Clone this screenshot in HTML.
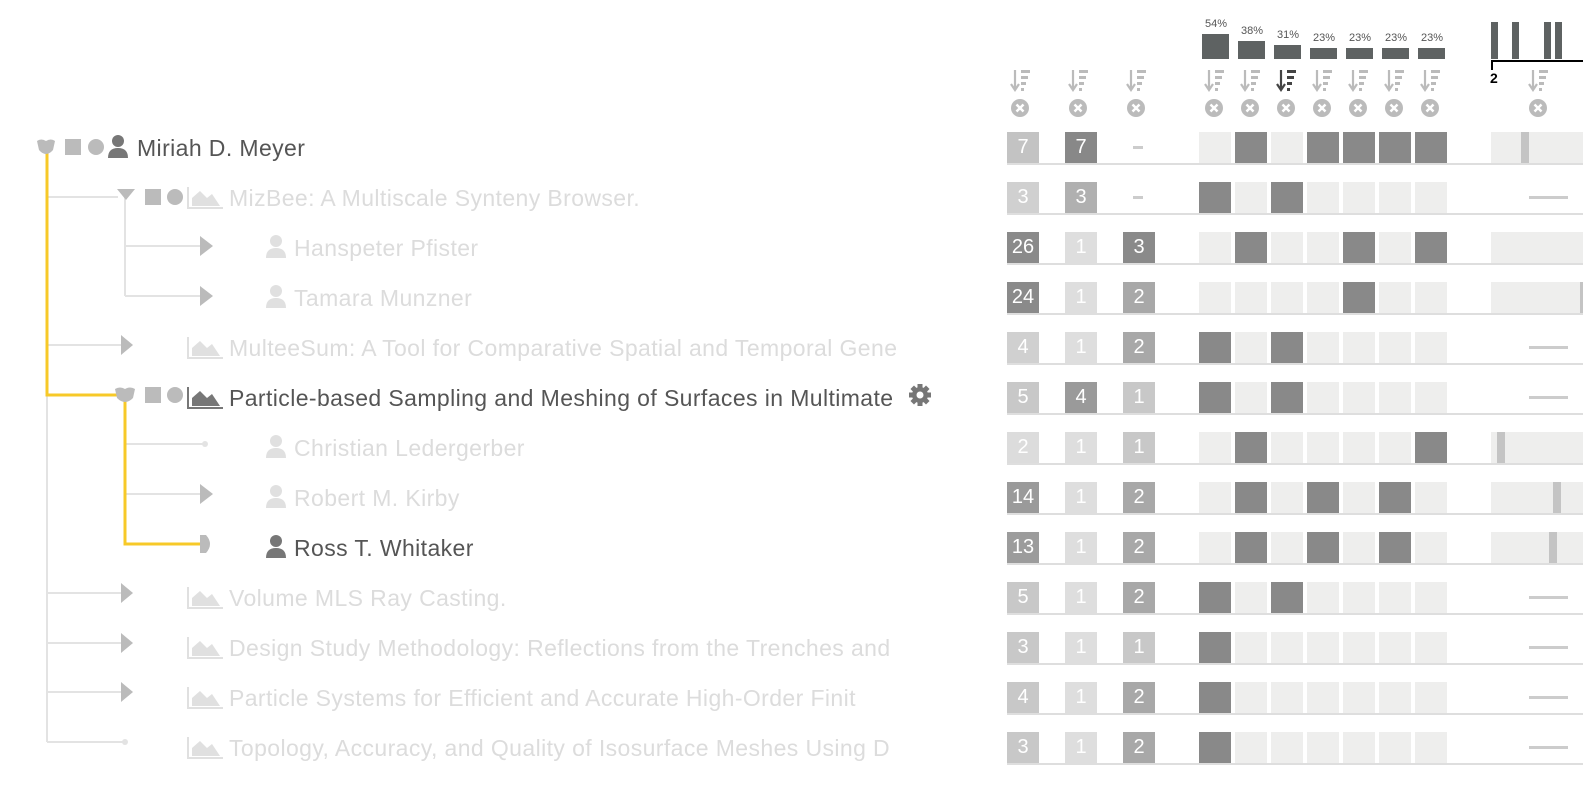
<!DOCTYPE html>
<html><head><meta charset="utf-8"><style>
html,body{margin:0;padding:0;background:#fff;width:1583px;height:792px;overflow:hidden;position:relative;font-family:"Liberation Sans",sans-serif}
.a{position:absolute}
.t{position:absolute;font-size:23px;line-height:26px;white-space:nowrap;color:#dcdcdc;letter-spacing:0.4px}
.on{color:#555}
.nb{position:absolute;width:32px;height:31px;color:#fff;font-size:20px;line-height:31px;text-align:center}
.pct{position:absolute;font-size:11px;color:#555;width:36px;text-align:center}
</style></head><body>
<svg class="a" style="left:0;top:0" width="1583" height="792" id="s">
<g stroke="#e3e3e3" stroke-width="2" fill="none">
<line x1="47" y1="395" x2="47" y2="742"/>
<line x1="47" y1="197" x2="118" y2="197"/>
<line x1="125" y1="197" x2="125" y2="296"/>
<line x1="125" y1="246" x2="200" y2="246"/>
<line x1="125" y1="296" x2="200" y2="296"/>
<line x1="47" y1="345" x2="121" y2="345"/>
<line x1="125" y1="444" x2="205" y2="444"/>
<line x1="125" y1="494" x2="200" y2="494"/>
<line x1="47" y1="593" x2="121" y2="593"/>
<line x1="47" y1="643" x2="121" y2="643"/>
<line x1="47" y1="692" x2="121" y2="692"/>
<line x1="47" y1="742" x2="125" y2="742"/>
</g>
<circle cx="205" cy="444" r="3" fill="#e3e3e3"/>
<circle cx="125" cy="742" r="3" fill="#e3e3e3"/>
<g stroke="#f7c928" stroke-width="3" fill="none">
<polyline points="47,150 47,395 125,395"/>
<polyline points="125,398 125,544 202,544"/>
</g>
<path d="M37,141 Q41,138 46,141 Q51,138 55,141 L53,150 Q46,158 39,150 Z" fill="#bbb"/>
<rect x="65" y="139" width="16" height="16" fill="#bbb"/>
<circle cx="96" cy="147" r="8" fill="#bbb"/>
<g fill="#777"><circle cx="118" cy="141" r="6"/><path d="M108,158 Q108,148 118,148 Q128,148 128,158 Z"/></g>
<path d="M117,189 L135,189 L126,200 Z" fill="#bbb"/>
<rect x="145" y="189" width="16" height="16" fill="#bbb"/>
<circle cx="175" cy="197" r="8" fill="#bbb"/>
<path d="M115,389 Q120,386 125,389 Q130,386 135,389 L133,398 Q125,406 117,398 Z" fill="#bbb"/>
<rect x="145" y="387" width="16" height="16" fill="#bbb"/>
<circle cx="175" cy="395" r="8" fill="#bbb"/>
<g fill="#bbb">
<path d="M121,335 L133,345 L121,355 Z"/>
<path d="M121,583 L133,593 L121,603 Z"/>
<path d="M121,633 L133,643 L121,653 Z"/>
<path d="M121,682 L133,692 L121,702 Z"/>
<path d="M200,236 L213,246 L200,256 Z"/>
<path d="M200,286 L213,296 L200,306 Z"/>
<path d="M200,484 L213,494 L200,504 Z"/>
<path d="M200,535 L206,535 Q214,544 206,553 L200,553 Z"/>
</g>
<g transform="translate(920,395)" fill="#777">
<circle r="8"/>
<g id="teeth"></g>
<circle r="3.5" fill="#fff"/>
</g>
</svg>
<div id="txt"></div>
<script>
var s=document.getElementById('s'),NS='http://www.w3.org/2000/svg';
function el(n,a,p){var e=document.createElementNS(NS,n);for(var k in a)e.setAttribute(k,a[k]);(p||s).appendChild(e);return e;}
var teeth=document.getElementById('teeth');
for(var i=0;i<8;i++){el('rect',{x:-2.5,y:-11,width:5,height:6,transform:'rotate('+(i*45)+')'},teeth);}
function person(x,y,c){el('circle',{cx:x+11,cy:y-6,r:6,fill:c});el('path',{d:'M'+(x+1)+','+(y+11)+' Q'+(x+1)+','+(y+1)+' '+(x+11)+','+(y+1)+' Q'+(x+21)+','+(y+1)+' '+(x+21)+','+(y+11)+' Z',fill:c});}
function chart(x,y,c,c2){el('path',{d:'M'+x+','+(y-10)+' L'+x+','+(y+11)+' L'+(x+35)+','+(y+11),stroke:c2,'stroke-width':2,fill:'none'});el('path',{d:'M'+(x+4)+','+(y+9)+' L'+(x+4)+','+(y+1)+' L'+(x+12)+','+(y-6)+' L'+(x+19)+','+(y+1)+' L'+(x+24)+','+(y-3)+' L'+(x+32)+','+(y+9)+' Z',fill:c});}
var Y=function(i){return 147+50*i;};
var rows=[
[0,'Miriah D. Meyer',1],[1,'MizBee: A Multiscale Synteny Browser.',0],[2,'Hanspeter Pfister',0],[2,'Tamara Munzner',0],
[1,'MulteeSum: A Tool for Comparative Spatial and Temporal Gene',0],[1,'Particle-based Sampling and Meshing of Surfaces in Multimate',1],
[2,'Christian Ledergerber',0],[2,'Robert M. Kirby',0],[2,'Ross T. Whitaker',1],[1,'Volume MLS Ray Casting.',0],
[1,'Design Study Methodology: Reflections from the Trenches and',0],[1,'Particle Systems for Efficient and Accurate High-Order Finit',0],
[1,'Topology, Accuracy, and Quality of Isosurface Meshes Using D',0]];
var h='';
rows.forEach(function(r,i){var y=Y(i);var x=r[0]==0?137:r[0]==1?229:294;
 h+='<div class="t'+(r[2]?' on':'')+'" style="left:'+x+'px;top:'+(y-12)+'px">'+r[1]+'</div>';
 if(r[0]==1)chart(188,y,r[2]?'#777':'#e0e0e0',r[2]?'#777':'#e0e0e0');
 if(r[0]==2)person(265,y,r[2]?'#777':'#e0e0e0');
});
var N=[[['7','#c3c3c3'],['7','#888'],null],[['3','#d0d0d0'],['3','#b0b0b0'],null],[['26','#8a8a8a'],['1','#dedede'],['3','#8a8a8a']],
[['24','#8a8a8a'],['1','#dedede'],['2','#a8a8a8']],[['4','#d0d0d0'],['1','#dedede'],['2','#a8a8a8']],[['5','#c8c8c8'],['4','#9a9a9a'],['1','#c8c8c8']],
[['2','#dcdcdc'],['1','#dedede'],['1','#c8c8c8']],[['14','#9a9a9a'],['1','#dedede'],['2','#a8a8a8']],[['13','#9c9c9c'],['1','#dedede'],['2','#a8a8a8']],
[['5','#c8c8c8'],['1','#dedede'],['2','#a8a8a8']],[['3','#c8c8c8'],['1','#dedede'],['1','#c8c8c8']],[['4','#c8c8c8'],['1','#dedede'],['2','#a8a8a8']],[['3','#c8c8c8'],['1','#dedede'],['2','#a8a8a8']]];
var M=['LDLDDDD','DLDLLLL','LDLLDLD','LLLLDLL','DLDLLLL','DLDLLLL','LDLLLLD','LDLDLDL','LDLDLDL','DLDLLLL','DLLLLLL','DLLLLLL','DLLLLLL'];
var H=[['c',1521],['d'],['c'],['c',1580],['d'],['d'],['c',1497],['c',1553],['c',1549],['d'],['d'],['d'],['d']];
var NX=[1007,1065,1123];
N.forEach(function(r,i){var t=132+50*i;
 el('rect',{x:1007,y:t+31,width:576,height:2,fill:'#dedede'});
 r.forEach(function(c,j){ if(c){h+='<div class="nb" style="left:'+NX[j]+'px;top:'+t+'px;background:'+c[1]+'">'+c[0]+'</div>';}
  else el('rect',{x:NX[j]+10,y:t+14,width:10,height:3,fill:'#ccc'});});
 for(var k=0;k<7;k++)el('rect',{x:1199+36*k,y:t,width:32,height:31,fill:M[i][k]=='D'?'#898989':'#eeeeed'});
 var hh=H[i];
 if(hh[0]=='c'){el('rect',{x:1491,y:t,width:92,height:31,fill:'#eeeeed'});if(hh[1])el('rect',{x:hh[1],y:t,width:8,height:31,fill:'#c4c4c4'});}
 else el('rect',{x:1529,y:t+14,width:39,height:3,fill:'#ccc'});
});
var P=[['54%',25],['38%',18],['31%',14],['23%',11],['23%',11],['23%',11],['23%',11]];
P.forEach(function(p,k){var x=1202+36*k;el('rect',{x:x,y:59-p[1],width:27,height:p[1],fill:'#5e6262'});
 h+='<div class="pct" style="left:'+(x-4)+'px;top:'+(59-p[1]-16)+'px">'+p[0]+'</div>';});
[1491,1512,1544,1555].forEach(function(x){el('rect',{x:x,y:22,width:7,height:37,fill:'#5e6262'});});
el('path',{d:'M1492,70 L1492,61 L1583,61',stroke:'#000','stroke-width':2,fill:'none'});
h+='<div class="a" style="left:1490px;top:70px;font-size:14px;font-weight:bold">2</div>';
var cx=[1021,1079,1137,1215,1251,1287,1323,1359,1395,1431,1539];
cx.forEach(function(x,k){var c=(k==5)?'#444':'#bbb';
 el('path',{d:'M'+(x-6)+',70 L'+(x-6)+',88 M'+(x-10)+',84 L'+(x-6)+',90 L'+(x-2)+',84',stroke:c,'stroke-width':2.2,fill:'none'});
 el('rect',{x:x,y:70,width:9,height:3,fill:c});el('rect',{x:x,y:76,width:7,height:3,fill:c});el('rect',{x:x,y:82,width:5,height:3,fill:c});el('rect',{x:x,y:88,width:3,height:3,fill:c});
 el('circle',{cx:x-1,cy:108,r:9,fill:'#bbb'});
 el('path',{d:'M'+(x-4.5)+',104.5 L'+(x+2.5)+',111.5 M'+(x+2.5)+',104.5 L'+(x-4.5)+',111.5',stroke:'#fff','stroke-width':2.5});
});
document.getElementById('txt').innerHTML=h;
</script>
</body></html>
